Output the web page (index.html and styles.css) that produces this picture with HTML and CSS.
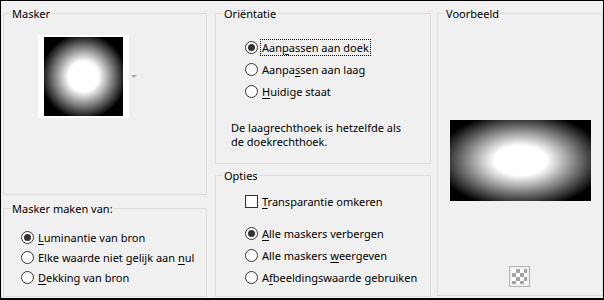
FILE: index.html
```html
<!DOCTYPE html>
<html lang="nl">
<head>
<meta charset="utf-8">
<title>Masker</title>
<link rel="stylesheet" href="styles.css">
</head>
<body>
<div class="window">
  <div class="col col-1">
    <fieldset class="group g-masker">
      <legend>Masker</legend>
      <div class="mask-picker">
        <div class="thumb"><div class="thumb-img"></div></div>
        <span class="drop-arrow"></span>
      </div>
    </fieldset>
    <fieldset class="group g-source">
      <legend>Masker maken van:</legend>
      <div class="inner source-inner">
        <div class="opts rows-20">
          <label class="opt"><span class="radio checked"></span><span class="txt"><u>L</u>uminantie van bron</span></label>
          <label class="opt"><span class="radio"></span><span class="txt">Elke waarde niet gelijk aan <u>n</u>ul</span></label>
          <label class="opt"><span class="radio"></span><span class="txt"><u>D</u>ekking van bron</span></label>
        </div>
      </div>
    </fieldset>
  </div>
  <div class="col col-2">
    <fieldset class="group g-orient">
      <legend>Oriëntatie</legend>
      <div class="inner orient-inner">
        <div class="opts rows-22">
          <label class="opt"><span class="radio checked"></span><span class="txt focus">Aan<u>p</u>assen aan doek</span></label>
          <label class="opt"><span class="radio"></span><span class="txt">Aanpa<u>s</u>sen aan laag</span></label>
          <label class="opt"><span class="radio"></span><span class="txt"><u>H</u>uidige staat</span></label>
        </div>
        <p class="note">De laagrechthoek is hetzelfde als<br>de doekrechthoek.</p>
      </div>
    </fieldset>
    <fieldset class="group g-opties">
      <legend>Opties</legend>
      <div class="inner opties-inner">
        <label class="opt check-row"><span class="checkbox"></span><span class="txt"><u>T</u>ransparantie omkeren</span></label>
        <div class="opts rows-22 opties-radios">
          <label class="opt"><span class="radio checked"></span><span class="txt"><u>A</u>lle maskers verbergen</span></label>
          <label class="opt"><span class="radio"></span><span class="txt">Alle maskers <u>w</u>eergeven</span></label>
          <label class="opt"><span class="radio"></span><span class="txt">A<u>f</u>beeldingswaarde gebruiken</span></label>
        </div>
      </div>
    </fieldset>
  </div>
  <div class="col col-3">
    <fieldset class="group g-preview">
      <legend>Voorbeeld</legend>
      <div class="preview"></div>
      <div class="checker-wrap"><span class="checker-btn"><span class="checker"></span></span></div>
    </fieldset>
  </div>
</div>
</body>
</html>
```
FILE: styles.css
```css
* { box-sizing: border-box; }
html, body { margin: 0; padding: 0; background: #000; }
body {
  font-family: "Noto Sans", "Open Sans", "Liberation Sans", sans-serif;
  font-size: 11px;
  color: #000;
}
.window {
  width: 604px;
  height: 300px;
  border: 1px solid #000;
  border-bottom-width: 2px;
  background: #f0f0f0;
  padding: 5px 0 0 2px;
  display: flex;
  align-items: flex-start;
}
.col { display: flex; flex-direction: column; }
.col-1 { width: 204px; gap: 6px; }
.col-2 { width: 216px; margin-left: 8px; gap: 4px; }
.col-3 { width: 166px; margin-left: 6px; }

.group {
  margin: 0;
  padding: 0;
  min-width: 0;
  border: 1px solid #dcdcdc;
}
.group legend {
  margin-left: 7px;
  padding: 0 1px;
  line-height: 15px;
  height: 15px;
}
.g-masker { height: 189px; }
.g-source { height: 96px; }
.g-orient { height: 158px; }
.g-opties { height: 129px; }
.g-preview { height: 290px; }

.source-inner { padding: 11px 0 0 17px; }
.orient-inner { padding: 15px 0 0 29px; }
.opties-inner { padding: 8px 0 0 29px; }

/* mask picker */
.mask-picker {
  display: flex;
  align-items: center;
  margin: 14px 0 0 34px;
}
.thumb {
  width: 91px;
  height: 83px;
  background: #fff;
  padding: 2px 6px;
}
.thumb-img {
  width: 79px;
  height: 79px;
  background: radial-gradient(circle 43px at 50% 50%, #fff 0, #fff 35%, #000 100%);
}
.drop-arrow {
  width: 0;
  height: 0;
  margin-left: 2px;
  border-left: 3px solid transparent;
  border-right: 3px solid transparent;
  border-top: 3px solid #a8a8a8;
}

/* options */
.opts { display: flex; flex-direction: column; }
.opt {
  display: flex;
  align-items: center;
  white-space: nowrap;
}
.rows-20 .opt { height: 20px; }
.rows-22 .opt { height: 22px; }
.radio {
  flex: none;
  width: 13px;
  height: 13px;
  border: 1px solid #333;
  border-radius: 50%;
  background: #fff;
  display: flex;
  align-items: center;
  justify-content: center;
  margin-right: 3px;
}
.radio.checked::after {
  content: "";
  width: 7px;
  height: 7px;
  border-radius: 50%;
  background: #333;
}
.checkbox {
  flex: none;
  width: 13px;
  height: 13px;
  border: 1px solid #333;
  background: #fff;
  margin-right: 3px;
}
.txt { line-height: 15px; padding: 0 1px; }
.txt u { text-decoration-thickness: 1px; text-underline-offset: 2px; }
.focus { outline: 1px dotted #000; outline-offset: 0; }
.check-row { height: 20px; }
.opties-radios { margin-top: 11px; }

.note {
  margin: 19px 0 0 -14px;
  line-height: 14px;
}

/* preview */
.preview {
  width: 141px;
  height: 81px;
  margin: 99px 0 0 12px;
  background: radial-gradient(ellipse 84px 48px at 50% 50%, #fff 0, #fff 31%, #000 100%);
}
.checker-wrap {
  display: flex;
  justify-content: center;
  margin-top: 65px;
  padding-right: 1px;
}
.checker-btn {
  width: 21px;
  height: 21px;
  border: 1px solid #b4b4b4;
  background: #f0f0f0;
  padding: 2px;
}
.checker {
  display: block;
  width: 15px;
  height: 15px;
  background-color: #fff;
  background-image: conic-gradient(#a4a4a4 25%, #fff 0 50%, #a4a4a4 0 75%, #fff 0);
  background-size: 8px 8px;
}
```
